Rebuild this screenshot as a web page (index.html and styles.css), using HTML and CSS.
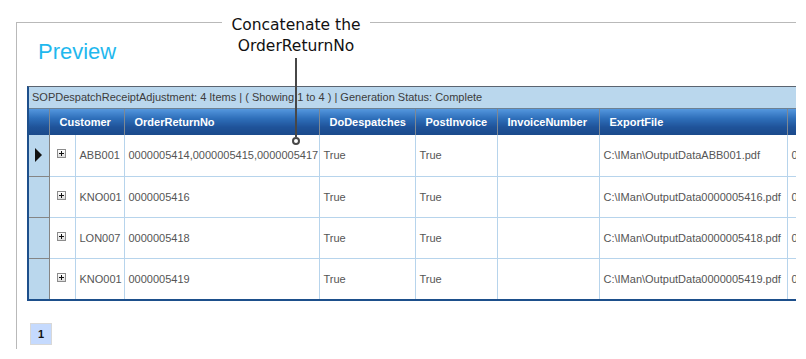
FILE: index.html
```html
<!DOCTYPE html>
<html lang="en">
<head>
  <meta charset="UTF-8" />
  <title>Preview</title>
  <link rel="stylesheet" href="styles.css">
</head>
<body>
  <div class="marco">
    <h1 class="titulo">Preview</h1>

    <div class="rejilla">
      <div class="estado">SOPDespatchReceiptAdjustment: 4 Items | ( Showing 1 to 4 ) | Generation Status: Complete</div>
      <table>
        <colgroup>
          <col class="c-sel" />
          <col class="c-exp" />
          <col class="c-cli" />
          <col class="c-ord" />
          <col class="c-des" />
          <col class="c-pos" />
          <col class="c-inv" />
          <col class="c-exf" />
          <col class="c-mas" />
        </colgroup>
        <thead>
          <tr>
            <th class="sel"></th>
            <th colspan="2">Customer</th>
            <th>OrderReturnNo</th>
            <th>DoDespatches</th>
            <th>PostInvoice</th>
            <th>InvoiceNumber</th>
            <th>ExportFile</th>
            <th></th>
          </tr>
        </thead>
        <tbody>
          <tr>
            <td class="sel"><span class="flecha"></span></td>
            <td class="exp"><span class="mas"></span></td>
            <td>ABB001</td>
            <td>0000005414,0000005415,0000005417</td>
            <td>True</td>
            <td>True</td>
            <td></td>
            <td>C:\IMan\OutputDataABB001.pdf</td>
            <td>0</td>
          </tr>
          <tr>
            <td class="sel"></td>
            <td class="exp"><span class="mas"></span></td>
            <td>KNO001</td>
            <td>0000005416</td>
            <td>True</td>
            <td>True</td>
            <td></td>
            <td>C:\IMan\OutputData0000005416.pdf</td>
            <td>0</td>
          </tr>
          <tr>
            <td class="sel"></td>
            <td class="exp"><span class="mas"></span></td>
            <td>LON007</td>
            <td>0000005418</td>
            <td>True</td>
            <td>True</td>
            <td></td>
            <td>C:\IMan\OutputData0000005418.pdf</td>
            <td>0</td>
          </tr>
          <tr>
            <td class="sel"></td>
            <td class="exp"><span class="mas"></span></td>
            <td>KNO001</td>
            <td>0000005419</td>
            <td>True</td>
            <td>True</td>
            <td></td>
            <td>C:\IMan\OutputData0000005419.pdf</td>
            <td>0</td>
          </tr>
        </tbody>
      </table>
    </div>

    <div class="paginas">
      <span class="pagina">1</span>
    </div>
  </div>

  <!-- nota que se superpone al marco -->
  <div class="nota">Concatenate the<br />OrderReturnNo</div>
  <svg class="guia" width="14" height="90" viewBox="0 0 14 90">
    <line x1="7" y1="0" x2="7" y2="79" stroke="#474747" stroke-width="2" />
    <circle cx="7" cy="83" r="3" fill="#fff" stroke="#474747" stroke-width="2" />
  </svg>
</body>
</html>
```

FILE: styles.css
```css
* {
  margin: 0;
  padding: 0;
  box-sizing: border-box;
}
body {
  width: 806px;
  height: 359px;
  background: #fff;
  font-family: "Liberation Sans", Arial, sans-serif;
  position: relative;
  overflow: hidden;
}
.marco {
  margin: 22px 0 0 16px;
  width: 780px;
  height: 327px;
  border-top: 1px solid #b9b9b9;
  border-left: 1px solid #b9b9b9;
  padding: 16px 0 0 10px;
  overflow: hidden;
}
.titulo {
  font-size: 22px;
  line-height: 26px;
  font-weight: normal;
  color: #1fb8ee;
  padding-left: 11px;
}
.rejilla {
  margin-top: 21px;
  width: 900px;
  border-top: 1px solid #5b6470;
  border-left: 2px solid #1d4f8b;
  border-bottom: 2px solid #1d4f8b;
  font-size: 11px;
}
.estado {
  height: 22px;
  line-height: 21px;
  background: #bad7ed;
  color: #3c3c3c;
  padding-left: 3px;
  border-bottom: 1px solid #6d8193;
}
table {
  border-collapse: collapse;
  table-layout: fixed;
  width: 898px;
}
.c-sel { width: 20px; }
.c-exp { width: 26px; }
.c-cli { width: 49px; }
.c-ord { width: 195px; }
.c-des { width: 96px; }
.c-pos { width: 82px; }
.c-inv { width: 102px; }
.c-exf { width: 188px; }
.c-mas { width: 140px; }
th {
  height: 26px;
  text-align: left;
  padding-left: 10px;
  color: #fff;
  font-weight: bold;
  background: linear-gradient(#5597de, #2f70bb 35%, #1f5399 70%, #1b4a8b);
  border-left: 1px solid #7e8893;
  border-right: 1px solid #7e8893;
  white-space: nowrap;
}
th.sel {
  border-left: none;
}
td {
  height: 41px;
  padding-left: 4px;
  color: #555;
  white-space: nowrap;
  overflow: hidden;
  border: 1px solid #b7d4ec;
  vertical-align: middle;
}
td.sel {
  background: #bad7ed;
  border-top: 1px solid #858585;
  border-bottom: 1px solid #858585;
  border-right: 1px solid #858585;
  border-left: none;
  padding-left: 6px;
}
tbody tr:first-child td {
  border-top: none;
}
tbody tr:last-child td {
  border-bottom: none;
}
td.exp {
  padding-left: 7px;
}
.flecha {
  display: block;
  width: 0;
  height: 0;
  border-top: 7px solid transparent;
  border-bottom: 7px solid transparent;
  border-left: 7px solid #111;
}
.mas {
  display: block;
  width: 9px;
  height: 9px;
  margin-top: -3px;
  border: 1px solid #8c8c8c;
  background: linear-gradient(#fff, #dcdcdc);
  position: relative;
}
.mas::before,
.mas::after {
  content: "";
  position: absolute;
  background: #111;
}
.mas::before {
  left: 1px;
  top: 3px;
  width: 5px;
  height: 1px;
}
.mas::after {
  left: 3px;
  top: 1px;
  width: 1px;
  height: 5px;
}
.paginas {
  margin-top: 22px;
  padding-left: 3px;
  display: flex;
}
.pagina {
  width: 22px;
  height: 22px;
  line-height: 20px;
  text-align: center;
  background: #c5dafe;
  border: 1px solid #d8d8d8;
  font-size: 11px;
  font-weight: bold;
  color: #111;
}
.nota {
  position: absolute;
  left: 222px;
  top: 15px;
  width: 148px;
  background: #fff;
  text-align: center;
  font-family: "DejaVu Sans", sans-serif;
  font-size: 15.5px;
  line-height: 21px;
  color: #111;
}
.guia {
  position: absolute;
  left: 289px;
  top: 58px;
}
```
